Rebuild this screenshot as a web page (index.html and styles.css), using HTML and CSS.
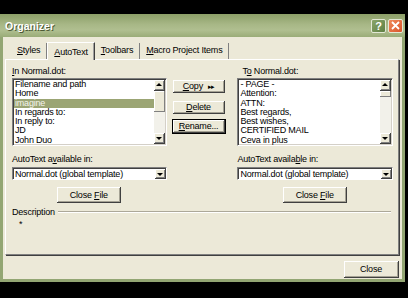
FILE: index.html
```html
<!DOCTYPE html>
<html lang="en">
<head>
    <meta charset="UTF-8">
    <title>Organizer</title>
    <link rel="stylesheet" href="styles.css">
</head>
<body>
    <div class="window">
        <!-- Title bar -->
        <div class="titlebar">
            <span class="title">Organizer</span>
            <div class="caption-buttons">
                <span class="cap-btn help">?</span>
                <span class="cap-btn close">
                    <svg width="9" height="9" viewBox="0 0 9 9"><path d="M1 1 L8 8 M8 1 L1 8" stroke="#fff" stroke-width="1.8"/></svg>
                </span>
            </div>
        </div>

        <div class="body">
            <!-- Tabs -->
            <div class="tabs">
                <span class="tab"><u>S</u>tyles</span>
                <span class="tab active"><u>A</u>utoText</span>
                <span class="tab"><u>T</u>oolbars</span>
                <span class="tab"><u>M</u>acro Project Items</span>
            </div>

            <div class="panel">
                <div class="columns">
                    <!-- Left side -->
                    <div class="col">
                        <div class="label"><u>I</u>n Normal.dot:</div>
                        <div class="listbox">
                            <ul class="items">
                                <li>Filename and path</li>
                                <li>Home</li>
                                <li class="selected">imagine</li>
                                <li>In regards to:</li>
                                <li>In reply to:</li>
                                <li>JD</li>
                                <li>John Duo</li>
                            </ul>
                            <div class="scrollbar">
                                <span class="arrow up"></span>
                                <span class="thumb tall"></span>
                                <span class="track"></span>
                                <span class="arrow down"></span>
                            </div>
                        </div>
                        <div class="label spaced">AutoText a<u>v</u>ailable in:</div>
                        <div class="combo">
                            <span class="combo-text">Normal.dot (global template)</span>
                            <span class="arrow down"></span>
                        </div>
                        <button class="btn close-file">Close <u>F</u>ile</button>
                    </div>

                    <!-- Middle buttons -->
                    <div class="actions">
                        <button class="btn"><u>C</u>opy <span class="dbl">&#9656;&#9656;</span></button>
                        <button class="btn"><u>D</u>elete</button>
                        <button class="btn default"><u>R</u>ename...</button>
                    </div>

                    <!-- Right side -->
                    <div class="col">
                        <div class="label indent">T<u>o</u> Normal.dot:</div>
                        <div class="listbox">
                            <ul class="items">
                                <li>- PAGE -</li>
                                <li>Attention:</li>
                                <li>ATTN:</li>
                                <li>Best regards,</li>
                                <li>Best wishes,</li>
                                <li>CERTIFIED MAIL</li>
                                <li>Ceva in plus</li>
                            </ul>
                            <div class="scrollbar">
                                <span class="arrow up"></span>
                                <span class="thumb short"></span>
                                <span class="track"></span>
                                <span class="arrow down"></span>
                            </div>
                        </div>
                        <div class="label spaced">AutoText availa<u>b</u>le in:</div>
                        <div class="combo">
                            <span class="combo-text">Normal.dot (global template)</span>
                            <span class="arrow down"></span>
                        </div>
                        <button class="btn close-file">Close <u>F</u>ile</button>
                    </div>
                </div>

                <!-- Description group -->
                <div class="group">
                    <div class="group-head">
                        <span>Description</span>
                        <span class="etched"></span>
                    </div>
                    <div class="group-body">*</div>
                </div>
            </div>

            <div class="footer">
                <button class="btn close-btn">Close</button>
            </div>
        </div>
    </div>
</body>
</html>
```

FILE: styles.css
```css
/* Page */
body {
    margin: 0;
    background-color: #000;
    font-family: 'Liberation Sans', Arial, sans-serif;
    font-size: 9px;
    letter-spacing: -0.2px;
    color: #000;
}

.window {
    margin-top: 14px;
    width: 405px;
    height: 268px;
    box-sizing: border-box;
    background-color: #ece9d8;
    border: 3px solid #93a673;
    border-top: none;
    display: flex;
    flex-direction: column;
}

/* Title bar */
.titlebar {
    height: 23px;
    margin: 0 -3px;
    padding: 0 2px 0 5px;
    display: flex;
    align-items: center;
    justify-content: space-between;
    background: linear-gradient(#8c9f68, #a7b786 45%, #b0bf90 70%, #9aac78);
}

.title {
    color: #fff;
    font-weight: bold;
    font-size: 10.5px;
    letter-spacing: 0;
    text-shadow: 1px 1px 0 #4d5a36;
}

.caption-buttons {
    display: flex;
    gap: 2px;
}

.cap-btn {
    width: 15px;
    height: 14px;
    box-sizing: border-box;
    border: 1px solid #e3e8d6;
    border-radius: 2px;
    display: flex;
    align-items: center;
    justify-content: center;
    color: #fff;
    font-weight: bold;
    font-size: 11px;
}

.cap-btn.help {
    background: linear-gradient(135deg, #8aa56a, #5f7f43);
}

.cap-btn.close {
    background: linear-gradient(135deg, #f08a5c, #d9542b);
}

/* Body */
.body {
    flex: 1;
    display: flex;
    flex-direction: column;
    padding: 0 2px;
}

.tabs {
    display: flex;
    height: 18px;
    margin-top: 4px;
    padding-left: 5px;
    align-items: flex-end;
}

.tab {
    height: 16px;
    padding: 0 6px;
    line-height: 15px;
    box-sizing: border-box;
    border-right: 1px solid #808080;
    white-space: nowrap;
}

.tab:first-child {
    padding-left: 7px;
}

.tab.active {
    height: 18px;
    line-height: 18px;
    border-left: 1px solid #fff;
    border-top: 1px solid #fff;
    border-right: 1px solid #404040;
    box-shadow: inset -1px 0 0 #a0a0a0;
    margin-bottom: -1px;
    background-color: #ece9d8;
    position: relative;
}

.panel {
    height: 196px;
    box-sizing: border-box;
    border-top: 1px solid #fff;
    border-left: 1px solid #fff;
    border-right: 1px solid #808080;
    border-bottom: 1px solid #808080;
    box-shadow: 1px 1px 0 #404040;
    padding: 4px 5px 0 6px;
    margin-right: 1px;
}

.columns {
    display: flex;
}

.col {
    width: 155px;
    display: flex;
    flex-direction: column;
}

.col:last-child {
    width: 156px;
    margin-left: 12px;
}

.label {
    height: 14px;
    line-height: 14px;
    white-space: nowrap;
}

.label.indent {
    padding-left: 5px;
}

.label.spaced {
    margin-top: 6px;
    margin-bottom: 1px;
}

/* List boxes */
.listbox {
    height: 68px;
    box-sizing: border-box;
    background-color: #fff;
    border-top: 1px solid #808080;
    border-left: 1px solid #808080;
    border-right: 1px solid #fff;
    border-bottom: 1px solid #fff;
    box-shadow: inset 1px 1px 0 #404040, inset -1px -1px 0 #d4d0c8;
    padding: 1px 1px 0 1px;
    display: flex;
    overflow: hidden;
}

.items {
    list-style: none;
    margin: 0;
    padding: 0;
    flex: 1;
}

.items li {
    height: 9.3px;
    line-height: 9.3px;
    padding-left: 1px;
    white-space: nowrap;
}

.items li.selected {
    background-color: #9ba574;
    color: #f4f4ec;
}

.scrollbar {
    width: 11px;
    margin-bottom: 1px;
    display: flex;
    flex-direction: column;
    background-color: #f2f1ea;
}

.track {
    flex: 1;
}

.thumb {
    box-sizing: border-box;
    background-color: #ece9d8;
    border-bottom: 1px solid #808080;
    border-right: 1px solid #808080;
    box-shadow: inset 1px 1px 0 #fff;
}

.thumb.tall {
    height: 21px;
}

.thumb.short {
    height: 6px;
}

.arrow {
    width: 11px;
    height: 11px;
    flex: none;
    box-sizing: border-box;
    background-color: #ece9d8;
    border-right: 1px solid #404040;
    border-bottom: 1px solid #404040;
    box-shadow: inset 1px 1px 0 #fff, inset -1px -1px 0 #808080;
    position: relative;
}

.arrow::after {
    content: "";
    position: absolute;
    left: 2px;
    border-left: 3px solid transparent;
    border-right: 3px solid transparent;
}

.arrow.up::after {
    top: 3px;
    border-bottom: 3px solid #000;
}

.arrow.down::after {
    top: 4px;
    border-top: 3px solid #000;
}

/* Combo boxes */
.combo {
    height: 13px;
    box-sizing: border-box;
    background-color: #fff;
    border-top: 1px solid #808080;
    border-left: 1px solid #808080;
    border-right: 1px solid #fff;
    border-bottom: 1px solid #fff;
    box-shadow: inset 1px 1px 0 #404040;
    display: flex;
    align-items: center;
    padding: 1px 0 0 1px;
}

.combo-text {
    flex: 1;
    padding-left: 1px;
    line-height: 10px;
    white-space: nowrap;
}

.combo .arrow {
    height: 10px;
}

/* Buttons */
.btn {
    font-family: inherit;
    font-size: 9px;
    letter-spacing: -0.2px;
    color: #000;
    background-color: #ece9d8;
    border: none;
    border-right: 1px solid #404040;
    border-bottom: 1px solid #404040;
    box-shadow: inset 1px 1px 0 #fff, inset -1px -1px 0 #a5a294;
    padding: 0;
    cursor: pointer;
    white-space: nowrap;
}

.close-file {
    width: 64px;
    height: 16px;
    margin-top: 7px;
    align-self: center;
}

.actions {
    width: 53px;
    margin-left: 6px;
    padding-top: 16px;
    display: flex;
    flex-direction: column;
    gap: 8px;
}

.actions .btn {
    height: 13px;
}

.actions .btn.default {
    outline: 1px solid #000;
    margin-top: -2px;
}

.dbl {
    font-size: 7px;
    letter-spacing: -1px;
    padding-left: 3px;
}

/* Description group */
.group {
    margin-top: 3px;
}

.group-head {
    display: flex;
    align-items: center;
    gap: 3px;
    height: 12px;
}

.etched {
    flex: 1;
    height: 0;
    border-top: 1px solid #aca899;
    border-bottom: 1px solid #fff;
    margin-right: 2px;
}

.group-body {
    padding-left: 7px;
    height: 12px;
    line-height: 12px;
}

/* Footer */
.footer {
    display: flex;
    justify-content: flex-end;
    padding: 6px 1px 0 0;
}

.close-btn {
    width: 55px;
    height: 17px;
}
```
